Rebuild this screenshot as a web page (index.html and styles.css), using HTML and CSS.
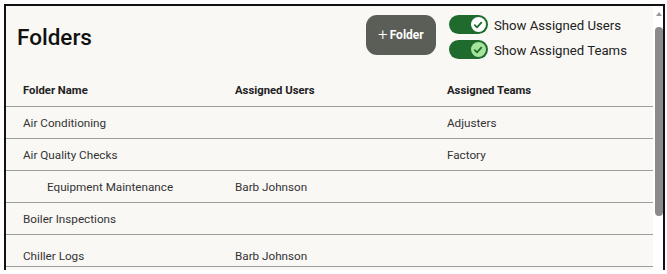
FILE: index.html
```html
<!DOCTYPE html>
<html lang="en">

<head>
  <meta charset="UTF-8" />
  <meta name="viewport" content="width=device-width, initial-scale=1.0" />
  <title>Folders</title>
  <link rel="stylesheet" href="styles.css">
</head>

<body>
  <div class="frame">
    <div class="main">
      <div class="top">
        <h1>Folders</h1>
        <button class="btn-folder" type="button"><span class="plus">+</span>Folder</button>
        <div class="toggles">
          <label class="toggle">
            <span class="track">
              <span class="knob">
                <svg viewBox="0 0 14 14" width="14" height="14">
                  <path d="M3.8 7.2 L6 9.3 L10.3 4.6" fill="none" stroke="#1f6b2d" stroke-width="1.8" stroke-linecap="round" stroke-linejoin="round" />
                </svg>
              </span>
            </span>
            <span class="toggle-text">Show Assigned Users</span>
          </label>
          <label class="toggle">
            <span class="track">
              <span class="knob knob-hover">
                <svg viewBox="0 0 14 14" width="14" height="14">
                  <path d="M3.8 7.2 L6 9.3 L10.3 4.6" fill="none" stroke="#1f6b2d" stroke-width="1.8" stroke-linecap="round" stroke-linejoin="round" />
                </svg>
              </span>
            </span>
            <span class="toggle-text">Show Assigned Teams</span>
          </label>
        </div>
      </div>

      <div class="table">
        <div class="row head">
          <div>Folder Name</div>
          <div>Assigned Users</div>
          <div>Assigned Teams</div>
        </div>
        <div class="row">
          <div>Air Conditioning</div>
          <div></div>
          <div>Adjusters</div>
        </div>
        <div class="row">
          <div>Air Quality Checks</div>
          <div></div>
          <div>Factory</div>
        </div>
        <div class="row">
          <div class="child">Equipment Maintenance</div>
          <div>Barb Johnson</div>
          <div></div>
        </div>
        <div class="row">
          <div>Boiler Inspections</div>
          <div></div>
          <div></div>
        </div>
        <div class="row low">
          <div>Chiller Logs</div>
          <div>Barb Johnson</div>
          <div></div>
        </div>
      </div>
    </div>

    <div class="scrollbar">
      <span class="arrow"></span>
      <span class="thumb"></span>
    </div>
  </div>
</body>

</html>
```

FILE: styles.css
```css
* {
  margin: 0;
  padding: 0;
  box-sizing: border-box;
  font-family: Roboto, 'Liberation Sans', sans-serif;
}

body {
  background: #fff;
  padding: 4px 0 0 4px;
}

.frame {
  width: 661px;
  height: 266px;
  border: 2px solid #111;
  border-bottom: none;
  background: #f9f8f5;
  display: flex;
  overflow: hidden;
}

.main {
  flex: 1;
}

.top {
  height: 65px;
  display: flex;
  align-items: flex-start;
  padding: 9px 26px 0 11px;
}

h1 {
  flex: 1;
  font-size: 22.5px;
  font-weight: 500;
  color: #111;
  margin-top: 9px;
}

.btn-folder {
  width: 70px;
  height: 40px;
  border: none;
  border-radius: 11px;
  background: #5a5e57;
  color: #fff;
  font-size: 12px;
  font-weight: 700;
  display: flex;
  align-items: center;
  justify-content: center;
  gap: 2px;
  margin-right: 13px;
  cursor: pointer;
}

.btn-folder .plus {
  font-size: 17px;
  font-weight: 300;
  line-height: 1;
  margin-top: -2px;
}

.toggles {
  display: flex;
  flex-direction: column;
  gap: 6px;
}

.toggle {
  display: flex;
  align-items: center;
  gap: 6px;
  font-size: 13.2px;
  color: #222;
  height: 19px;
}

.toggle-text {
  padding-top: 2px;
}

.track {
  width: 39px;
  height: 19px;
  border-radius: 10px;
  background: #1f6b2d;
  display: flex;
  align-items: center;
  justify-content: flex-end;
  padding-right: 2px;
}

.knob {
  width: 15px;
  height: 15px;
  border-radius: 50%;
  background: #fff;
  display: flex;
  align-items: center;
  justify-content: center;
}

.knob-hover {
  background: #a6e39b;
}

.row {
  display: grid;
  grid-template-columns: 212px 212px 1fr;
  height: 32px;
  align-items: center;
  border-bottom: 1px solid #9d9d9b;
  font-size: 11.7px;
  color: #333;
}

.row > div {
  padding-left: 17px;
}

.row.head {
  height: 36px;
  font-size: 11.3px;
  font-weight: 700;
  color: #222;
  padding-top: 3px;
}

.row .child {
  padding-left: 41px;
}

.row.low {
  padding-top: 10px;
}

.scrollbar {
  width: 10px;
  background: #fff;
  padding-left: 2px;
}

.arrow {
  display: block;
  margin: 6px 0 0 1px;
  width: 0;
  height: 0;
  border-left: 3px solid transparent;
  border-right: 3px solid transparent;
  border-bottom: 4px solid #9a9a9a;
}

.thumb {
  display: block;
  width: 8px;
  height: 189px;
  margin-top: 11px;
  border-radius: 4px;
  background: #8a8a8a;
}
```
